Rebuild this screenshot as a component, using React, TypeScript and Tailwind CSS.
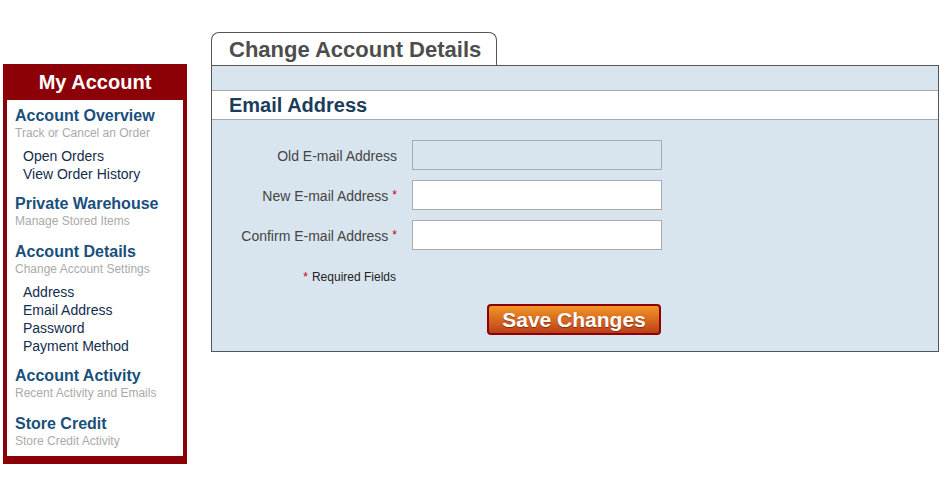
import React from "react";

type Section = { title: string; sub: string; links?: string[] };

const sections: Section[] = [
  { title: "Account Overview", sub: "Track or Cancel an Order", links: ["Open Orders", "View Order History"] },
  { title: "Private Warehouse", sub: "Manage Stored Items" },
  { title: "Account Details", sub: "Change Account Settings", links: ["Address", "Email Address", "Password", "Payment Method"] },
  { title: "Account Activity", sub: "Recent Activity and Emails" },
  { title: "Store Credit", sub: "Store Credit Activity" },
];

const fields = [
  { label: "Old E-mail Address", required: false, disabled: true },
  { label: "New E-mail Address", required: true, disabled: false },
  { label: "Confirm E-mail Address", required: true, disabled: false },
];

const Sidebar = () => (
  <aside className="w-[184px] mt-[64px] bg-[#8c0008] px-[4px] pb-[8px]">
    <div className="h-[36px] flex items-center justify-center text-white text-[20px] font-bold">
      My Account
    </div>
    <div className="bg-white pt-[7px] pb-[7px] pl-[8px]">
      {sections.map((s, i) => {
        const last = i === sections.length - 1;
        return (
          <div key={s.title} className={last ? "" : s.links ? "pb-[12px]" : "pb-[14px]"}>
            <div className="text-[16px] leading-[18px] font-bold text-[#1a4f7c]">{s.title}</div>
            <div className="text-[12px] leading-[16px] text-[#aaaaaa]">{s.sub}</div>
            {s.links && (
              <ul className="mt-[6px] pl-[8px]">
                {s.links.map((l) => (
                  <li key={l} className="text-[14px] leading-[18px] text-[#132d4d]">
                    {l}
                  </li>
                ))}
              </ul>
            )}
          </div>
        );
      })}
    </div>
  </aside>
);

const App = () => {
  return (
    <div className="min-h-[486px] bg-white flex items-start pl-[3px] font-['Liberation_Sans',Arial,sans-serif]">
      <Sidebar />

      <main className="ml-[24px] mt-[32px] w-[728px]">
        <div className="w-[286px] h-[33px] border border-b-0 border-[#555] rounded-t-[8px] bg-white pl-[17px] flex items-center">
          <span className="text-[22px] font-bold text-[#4d4d4d]">Change Account Details</span>
        </div>

        <div className="border border-[#555] bg-[#d9e5ee]">
          <div className="h-[25px] border-b border-[#aaaaaa]" />
          <div className="h-[29px] bg-white border-b border-[#aaaaaa] pl-[17px] flex items-center">
            <span className="text-[20px] font-bold text-[#1b3c5c]">Email Address</span>
          </div>

          <form className="pt-[20px] pb-[16px]" onSubmit={(e) => e.preventDefault()}>
            <div className="flex flex-col gap-[10px]">
              {fields.map((f) => (
                <div key={f.label} className="flex items-center">
                  <label className="w-[185px] pt-[2px] text-right text-[14px] text-[#444]">
                    {f.label}
                    {f.required && <span className="text-[12px] text-[#cc0000] align-top ml-[4px]">*</span>}
                  </label>
                  <input
                    type="text"
                    disabled={f.disabled}
                    className={`ml-[15px] w-[250px] h-[30px] border border-[#aaaaaa] outline-none ${
                      f.disabled ? "bg-[#d9e5ee]" : "bg-white"
                    }`}
                  />
                </div>
              ))}
            </div>

            <div className="mt-[19px] w-[184px] text-right text-[12px] leading-[16px] text-[#222]">
              <span className="text-[#cc0000] mr-[4px]">*</span>
              Required Fields
            </div>

            <div className="mt-[19px] flex">
              <div className="ml-[200px] w-[249px] flex justify-end">
                <button
                  type="submit"
                  className="w-[174px] h-[31px] rounded-[4px] border-2 border-[#8c0000] bg-gradient-to-b from-[#f39526] to-[#bb3f19] text-white text-[21px] font-bold leading-none [text-shadow:0_1px_1px_rgba(80,0,0,0.5)]"
                >
                  Save Changes
                </button>
              </div>
            </div>
          </form>
        </div>
      </main>
    </div>
  );
};

export default App;
